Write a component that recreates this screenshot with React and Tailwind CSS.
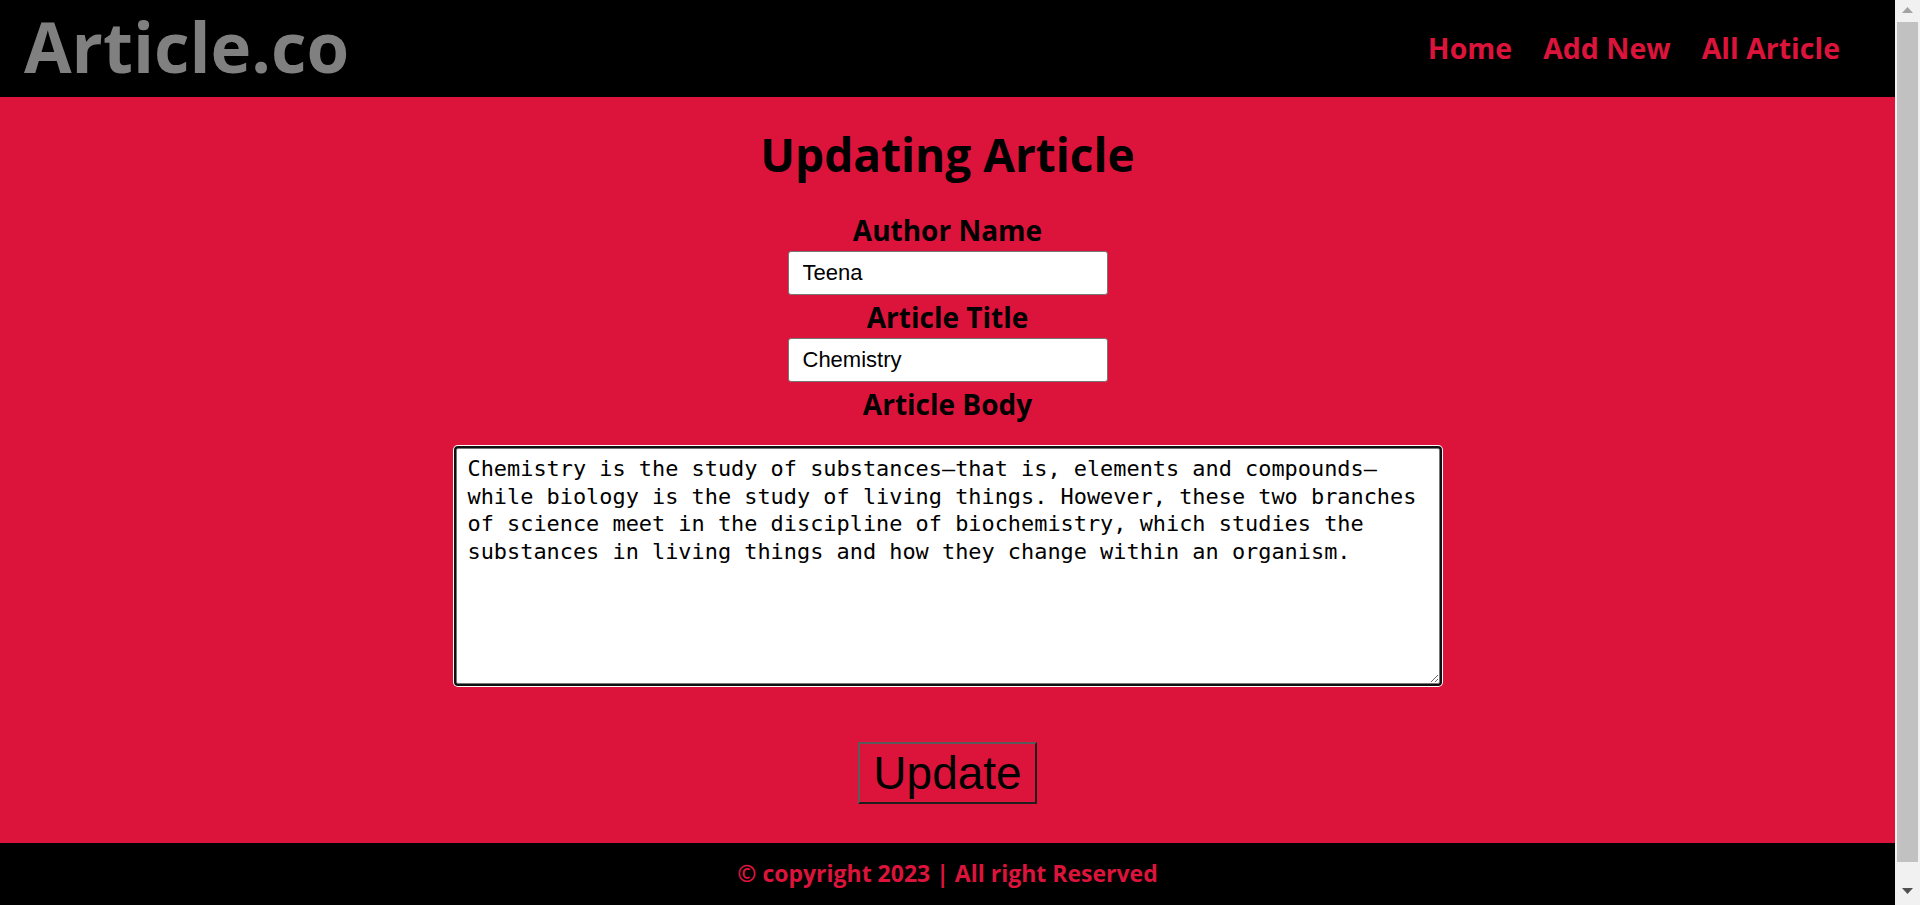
import React, { useState } from "react";

const bodyText =
  "Chemistry is the study of substances—that is, elements and compounds—while biology is the study of living things. However, these two branches of science meet in the discipline of biochemistry, which studies the substances in living things and how they change within an organism.";

const fieldClass =
  "mt-[5px] w-[320px] h-[44px] px-[14px] bg-white border border-[#767676] rounded-[3px] text-[22px] text-black font-['Liberation_Sans',_Arial,_sans-serif] outline-none";

function Header() {
  return (
    <header className="h-[97px] shrink-0 bg-black flex items-center justify-between pl-[24px] pr-[55px]">
      <h1 className="text-[69px] leading-none font-bold text-[#808080] -mt-[4px]">
        Article.co
      </h1>
      <nav className="flex items-center gap-[31px] text-[28.5px] font-bold text-[#dc143c]">
        <a href="#">Home</a>
        <a href="#">Add New</a>
        <a href="#">All Article</a>
      </nav>
    </header>
  );
}

// window scrollbar as it shows in the screenshot
function Scrollbar() {
  return (
    <aside className="w-[25px] shrink-0 bg-[#f1f1f1] flex flex-col">
      <div className="h-[22px] flex justify-center pt-[7px]">
        <svg width="11" height="6" viewBox="0 0 11 6">
          <polygon points="5.5,0 11,6 0,6" fill="#a3a3a3" />
        </svg>
      </div>
      <div className="flex-1 mx-[2px] bg-[#c1c1c1]" />
      <div className="h-[43px] flex justify-center pt-[26px]">
        <svg width="11" height="6" viewBox="0 0 11 6">
          <polygon points="0,0 11,0 5.5,6" fill="#505050" />
        </svg>
      </div>
    </aside>
  );
}

export default function App() {
  const [author, setAuthor] = useState("Teena");
  const [title, setTitle] = useState("Chemistry");
  const [body, setBody] = useState(bodyText);

  return (
    <div className="h-screen flex overflow-hidden font-['Open_Sans',_'Noto_Sans',_sans-serif]">
      <div className="flex-1 min-w-0 flex flex-col overflow-hidden">
        <Header />
        <main className="shrink-0 bg-[#dc143c] flex flex-col items-center pt-[29px]">
          <h2 className="text-[46px] leading-[56px] font-bold text-black">
            Updating Article
          </h2>
          <form
            className="flex flex-col items-center"
            onSubmit={(e) => e.preventDefault()}
          >
            <label className="mt-[32px] text-[28px] leading-[32px] font-bold text-black">
              Author Name
            </label>
            <input
              value={author}
              onChange={(e) => setAuthor(e.target.value)}
              className={fieldClass}
            />
            <label className="mt-[6px] text-[28px] leading-[32px] font-bold text-black">
              Article Title
            </label>
            <input
              value={title}
              onChange={(e) => setTitle(e.target.value)}
              className={fieldClass}
            />
            <label className="mt-[6px] text-[28px] leading-[32px] font-bold text-black">
              Article Body
            </label>
            <textarea
              value={body}
              onChange={(e) => setBody(e.target.value)}
              className="mt-[28px] w-[984px] h-[236px] px-[11px] pt-[6px] bg-white border border-[#767676] rounded-[2px] shadow-[0_0_0_2px_#101010,0_0_0_3px_#ffffff] text-[21.9px] leading-[27.5px] text-black font-['DejaVu_Sans_Mono',_'Liberation_Mono',_monospace] outline-none resize"
            />
            <button
              type="submit"
              className="mt-[58px] h-[62px] px-[13px] border-2 border-t-[#5a5a5a] border-l-[#5a5a5a] border-b-[#1e1e1e] border-r-[#1e1e1e] bg-transparent text-[46px] leading-none text-black font-['Liberation_Sans',_Arial,_sans-serif]"
            >
              Update
            </button>
          </form>
          <div className="h-[39px]" />
        </main>
        <footer className="shrink-0 bg-black h-[92px] pt-[16px] flex justify-center">
          <p className="text-[23px] leading-[28px] font-bold text-[#dc143c]">
            © copyright 2023 | All right Reserved
          </p>
        </footer>
      </div>
      <Scrollbar />
    </div>
  );
}
